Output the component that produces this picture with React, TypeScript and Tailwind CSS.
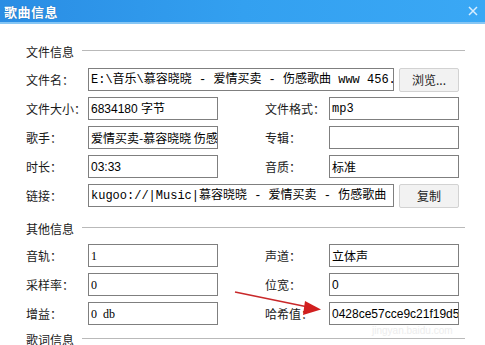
import React from "react";

const CJK = '"Noto Sans CJK SC", sans-serif';
const MONO = '"Liberation Mono", "Noto Sans CJK SC", monospace';
const SANS = '"Liberation Sans", "Noto Sans CJK SC", sans-serif';
const SERIF = '"Liberation Serif", "Noto Sans CJK SC", serif';

function Field({ text, w, font }: { text: string; w: string; font: string }) {
  return (
    <div
      className={`${w} h-[23px] shrink-0 border border-[#7f7f7f] bg-white pl-[2px] flex items-center overflow-hidden whitespace-pre text-[12px] text-black leading-none`}
      style={{ fontFamily: font }}
    >
      {text}
    </div>
  );
}

function Label({ text, w }: { text: string; w: string }) {
  return (
    <div className={`${w} shrink-0 text-[12px] text-[#1a1a1a] leading-none`}>{text}</div>
  );
}

function Btn({ text }: { text: string }) {
  return (
    <div className="w-[60px] h-[24px] shrink-0 rounded-[2px] border border-[#d2d2d2] bg-[#f2f2f2] flex items-center justify-center text-[12px] text-[#222]">
      {text}
    </div>
  );
}

function Section({ title }: { title: string }) {
  return (
    <div className="h-[16px] flex items-center gap-[8px]">
      <div className="text-[12px] text-[#1a1a1a] leading-none">{title}</div>
      <div className="flex-1 h-px bg-[#b9b9b9] -translate-y-[2px]" />
    </div>
  );
}

function Row2({ l1, v1, f1, l2, v2, f2 }: { l1: string; v1: string; f1: string; l2: string; v2: string; f2: string }) {
  return (
    <div className="h-[23px] flex items-center">
      <Label text={l1} w="w-[62px]" />
      <Field text={v1} w="w-[130px]" font={f1} />
      <div className="w-[47px] shrink-0" />
      <Label text={l2} w="w-[64px]" />
      <Field text={v2} w="w-[130px]" font={f2} />
    </div>
  );
}

export default function App() {
  return (
    <div className="relative w-[485px] h-[345px] overflow-hidden bg-white" style={{ fontFamily: CJK }}>
      <div className="h-[22px] flex items-center justify-between pl-[4px] pr-[7px] bg-gradient-to-r from-[#2a8de4] via-[#33a0f0] to-[#3aa8f5]">
        <div className="text-[13px] font-bold text-white leading-none tracking-[0.5px]" style={{ textShadow: "0 0 1px #1b5fa0" }}>
          歌曲信息
        </div>
        <svg width="10" height="10" viewBox="0 0 10 10">
          <path d="M1 1 L9 9 M9 1 L1 9" stroke="#d8eeff" strokeWidth="1.5" />
        </svg>
      </div>
      <div className="h-[2px] bg-[#86c6f4]" />
      <div className="pl-[26px] pr-[20px] pt-[20px] flex flex-col">
        <Section title="文件信息" />
        <div className="mt-[8px] flex flex-col gap-[6px]">
          <div className="h-[23px] flex items-center">
            <Label text="文件名：" w="w-[62px]" />
            <Field text="E:\音乐\慕容晓晓 - 爱情买卖 - 伤感歌曲 www 456.mp3" w="w-[306px]" font={MONO} />
            <div className="w-[5px] shrink-0" />
            <Btn text="浏览..." />
          </div>
          <Row2 l1="文件大小：" v1="6834180 字节" f1={SANS} l2="文件格式：" v2="mp3" f2={MONO} />
          <Row2 l1="歌手：" v1="爱情买卖-慕容晓晓 伤感歌曲" f1={CJK} l2="专辑：" v2="" f2={CJK} />
          <Row2 l1="时长：" v1="03:33" f1={SANS} l2="音质：" v2="标准" f2={CJK} />
          <div className="h-[23px] flex items-center">
            <Label text="链接：" w="w-[62px]" />
            <Field text="kugoo://|Music|慕容晓晓 - 爱情买卖 - 伤感歌曲 www 456" w="w-[306px]" font={MONO} />
            <div className="w-[5px] shrink-0" />
            <Btn text="复制" />
          </div>
        </div>
        <div className="mt-[14px]">
          <Section title="其他信息" />
        </div>
        <div className="mt-[7px] flex flex-col gap-[6px]">
          <Row2 l1="音轨：" v1="1" f1={SERIF} l2="声道：" v2="立体声" f2={CJK} />
          <Row2 l1="采样率：" v1="0" f1={SERIF} l2="位宽：" v2="0" f2={SANS} />
          <Row2 l1="增益：" v1="0  db" f1={SERIF} l2="哈希值：" v2="0428ce57cce9c21f19d5e8a1" f2={SANS} />
        </div>
        <div className="mt-[7px]">
          <Section title="歌词信息" />
        </div>
      </div>

      <div className="absolute left-[372px] top-[326px] text-[10px] text-[#ededed] leading-none" style={{ fontFamily: SANS }}>
        jingyan.baidu.com
      </div>

      <svg className="absolute left-0 top-0" width="485" height="345" viewBox="0 0 485 345">
        <line x1="235" y1="292" x2="308" y2="307" stroke="#c8282a" strokeWidth="1.6" />
        <path d="M321 309.5 L305 301 L303 315 Z" fill="#d11f1f" />
      </svg>
    </div>
  );
}
